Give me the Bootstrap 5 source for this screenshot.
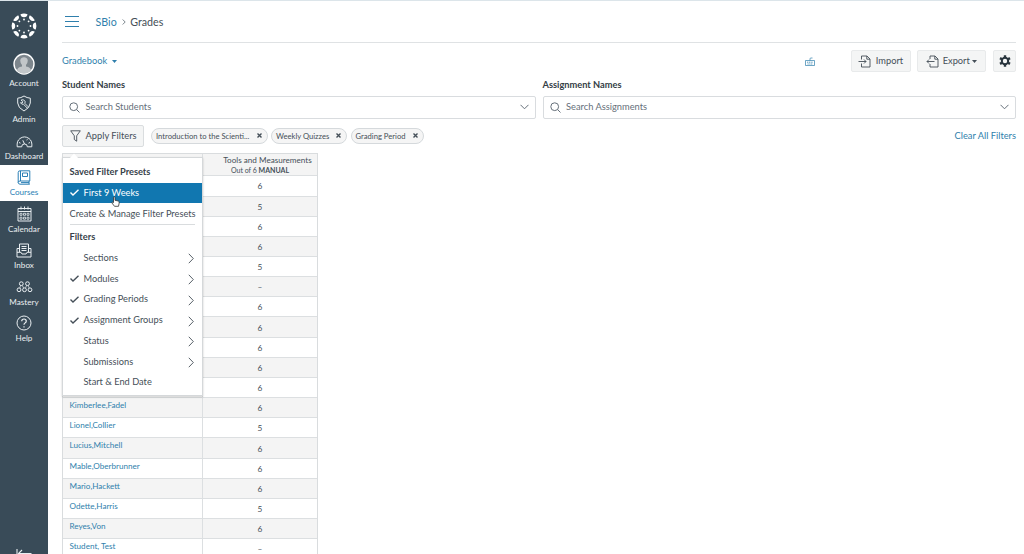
<!DOCTYPE html>
<html lang="en">
<head>
<meta charset="utf-8">
<meta name="viewport" content="width=device-width, initial-scale=1">
<title>Grades</title>
<link href="https://cdn.jsdelivr.net/npm/bootstrap@5.3.0/dist/css/bootstrap.min.css" rel="stylesheet">
<style>
body{font-family:Lato,"Liberation Sans",sans-serif;font-size:9.3px;line-height:12px;color:#454f58;height:554px;overflow:hidden;background:#fff;border-top:1px solid #dce5ea}
svg{display:block;fill:none;stroke:currentColor;stroke-width:1;flex:none}
a{color:#2f7fac;text-decoration:none}
.side{width:48px;height:553px;background:#394b58;color:#e9eef1;font-size:8.15px;line-height:11px;flex:none}
.side a{color:inherit;height:36.5px;padding-bottom:3px}
.side a svg{margin-bottom:2px}
.side a.account{height:41px}
.side a.account svg{margin-bottom:3px}
.side a.current{background:#fff;color:#2b7fb5}
.logo{height:49.5px;padding-top:12px}
.main-area{width:968px;padding-left:14px}
.topbar{height:42px;border-bottom:1px solid #dfe2e4;font-size:10.7px;padding-left:3px}
.tools{height:36px}
.tool{height:22.5px;background:#f4f5f5;border:1px solid #e8eaeb;border-radius:2px;font-size:9.3px}
.lbl{font-weight:700;font-size:9.25px;height:17px;color:#333d45}
.field{height:22.5px;border:1px solid #d9dcdf;border-radius:2px;padding:0 6px;font-size:9.3px;color:#66707a}
.filters{height:34.5px}
.pill{height:16px;border:1px solid #d5d9dc;border-radius:8px;background:#f5f5f5;font-size:7.65px;padding:0 5px 0 4px;margin-right:3.5px}
.gradegrid{width:256px;border:1px solid #d9dcde;border-bottom:0}
.gradegrid .ghead{height:22.4px;background:#f4f4f4;border-bottom:1px solid #dcdfe1}
.grow{height:20.17px;border-bottom:1px solid #dcdfe1}
.grow:nth-child(even){background:#fff}
.grow:nth-child(odd){background:#f4f4f4}
.gname{width:140px;border-right:1px solid #dcdfe1;padding:1px 0 0 6.5px;font-size:8.1px}
.gval{width:114px;font-size:8.3px;padding-top:1px}
.menu{top:3px;left:-1px;width:141px;height:239px;background:#fff;border:1px solid #d5d8da;box-shadow:0 1px 2px #0003;font-size:9.25px}
.menu .tip{top:-5px;left:6px}
.menu .item{height:20.75px;padding:0 6.5px}
.menu .item>svg{margin:2px 1.5px 0 0}
.menu .tick{width:14px}
.menu .on{background:#1177b0;color:#fff}
.menu .hd{font-weight:700;color:#37424a}
</style>
</head>
<body>
<div class="d-flex">
<nav class="side d-flex flex-column">
  <div class="logo d-flex justify-content-center align-items-start">
    <svg width="26" height="26" viewBox="-13 -13 26 26" stroke="none"><g fill="#fff" stroke="none">
      <g id="spoke"><path d="M-3.500-11.800Q0-13 3.500-11.800Q3.200-8.800 0-8.800Q-3.200-8.800-3.500-11.800Z"/><circle cy="-6.500" r=".9"/></g>
      <use href="#spoke" transform="rotate(45)"/><use href="#spoke" transform="rotate(90)"/><use href="#spoke" transform="rotate(135)"/><use href="#spoke" transform="rotate(180)"/><use href="#spoke" transform="rotate(225)"/><use href="#spoke" transform="rotate(270)"/><use href="#spoke" transform="rotate(315)"/></g></svg>
  </div>
  <a href="#" class="account d-flex flex-column align-items-center justify-content-end"><svg width="22" height="22" viewBox="0 0 22 22"><circle cx="11" cy="11" r="10" fill="#7d868d" stroke="#fff" stroke-width="1.4"/><path d="M4 18Q4 14.5 9 13.6V12Q7 10 7.300 7Q8 4.300 11 4.300T14.700 7Q15 10 13 12V13.600Q18 14.500 18 18Q11 23 4 18Z" fill="#c2c6c9" stroke="none"/></svg>Account</a>
  <a href="#" class="d-flex flex-column align-items-center justify-content-end"><svg width="16" height="17" viewBox="0 0 16 17"><path d="M8 1Q11 3 14.300 3.200V8Q14 13 8 16Q2 13 1.700 8V3.200Q5 3 8 1Z"/><path d="M5 5.200Q7 4 8.500 5.500T8.700 8.200L12 11.600L11 12.700L7.500 9.300Q5.500 9.700 4.500 7.700L6.300 8L6.800 6.600Z" stroke-width=".9"/></svg>Admin</a>
  <a href="#" class="d-flex flex-column align-items-center justify-content-end"><svg width="17" height="12" viewBox="0 0 17 12" style="margin-bottom:3px"><path d="M1.200 10.800Q.5 5 4 2.500Q8.500-.7 13 2.500Q16.500 5 15.800 10.800H11.300Q11.500 8 8.500 8T5.700 10.800Z"/><path d="M8.500 8L6.800 4.300M3 6.500l1.500.7M12.500 7.200L14 6.500M10.800 4.300l.5-1"/></svg>Dashboard</a>
  <a href="#" class="current d-flex flex-column align-items-center justify-content-end"><svg width="14" height="15" viewBox="0 0 14 15"><path d="M3 .8H12.800V11H3Q1.200 11 1.200 12.500T3 14.200H12.800M1.200 12.500V2.500Q1.200.8 3 .8M12 11V14M3.500 1V11M5.500 3H10.500V6.500H5.500ZM4 12.600H12"/></svg>Courses</a>
  <a href="#" class="d-flex flex-column align-items-center justify-content-end"><svg width="15" height="16" viewBox="0 0 15 16"><path d="M1 2.500H14V15H1ZM1 5.500H14M4 .5V3.500M7.500.5V3.500M11 .5V3.500"/><path d="M3 7.300h2v2H3zM6.500 7.300h2v2h-2zM10 7.300h2v2h-2zM3 11.200h2v2H3zM6.500 11.200h2v2h-2zM10 11.200h2v2h-2z" stroke-width=".8"/></svg>Calendar</a>
  <a href="#" class="d-flex flex-column align-items-center justify-content-end"><svg width="16" height="15" viewBox="0 0 16 15"><path d="M3.500 9V1H12.500V9M3.500 5.500H1V14H15V5.500H12.500M1 9.300H5L6 11H10L11 9.300H15M5.500 3.500H10.500M5.500 5.500H10.500M5.500 7.500H10.500"/></svg>Inbox</a>
  <a href="#" class="d-flex flex-column align-items-center justify-content-end"><svg width="17" height="12" viewBox="0 0 17 12" style="margin-bottom:4px"><circle cx="5.300" cy="2.700" r="1.900"/><circle cx="11.500" cy="2.700" r="1.900"/><circle cx="3" cy="8.800" r="1.900"/><circle cx="8.500" cy="8.800" r="1.900"/><circle cx="14" cy="8.800" r="1.900"/><path d="M4.600 4.500L3.800 7M6.300 4.500L7.600 7M10.600 4.500L9.500 7M12.200 4.500L13.200 7" stroke-width=".7"/></svg>Mastery</a>
  <a href="#" class="d-flex flex-column align-items-center justify-content-end"><svg width="16" height="16" viewBox="0 0 16 16"><circle cx="8" cy="8" r="7"/><path d="M5.700 6.300Q5.800 4 8 4T10.300 6.100Q10.300 7.300 9 8Q8 8.500 8 9.800M8 11.200V12.500" stroke-width="1.200"/></svg>Help</a>
  <div class="mt-auto d-flex justify-content-center overflow-hidden" style="height:6px"><svg width="16" height="10" viewBox="0 0 16 10"><path d="M1 1V10M2.500 5.500H15.500M6 2L2.500 5.500L6 9" stroke-width="1.100"/></svg></div>
</nav>
<main class="main-area">
  <header class="topbar d-flex align-items-center">
    <svg width="14" height="11" viewBox="0 0 14 11" style="color:#2f7fac"><path d="M0 .500H14M0 5.500H14M0 10.500H14"/></svg>
    <a href="#" style="margin-left:16.500px">SBio</a>
    <svg width="4" height="6" viewBox="0 0 4 6" style="color:#7b858d;margin:1px 4.500px 0 5px"><path d="M.7.5L3.200 3L.7 5.500"/></svg>
    <span>Grades</span>
  </header>
  <div class="tools d-flex align-items-center">
    <a href="#" class="d-flex align-items-center me-auto">Gradebook <svg width="5" height="3" viewBox="0 0 5 3" style="margin-left:5px"><path fill="currentColor" stroke="none" d="M0 0H5L2.500 3Z"/></svg></a>
    <svg width="10" height="9" viewBox="0 0 10 9" style="color:#2f7fac;margin-right:36px"><path d="M.5 3.500H9.500V8.500H.5ZM5 3.500V1.800Q5 1 6 1H7.500" stroke-width=".7"/><path d="M2 5.200H8M2.500 7H7.500" stroke-width=".8" stroke-dasharray="1.200 .6"/></svg>
    <div class="tool d-flex align-items-center justify-content-center" style="width:59.500px;margin-right:6.500px;gap:4.500px"><svg width="13" height="13" viewBox="0 0 13 13"><path d="M3.500 4.500V1H9L12 4V12H3.500V8.500M8.800 1V4.200H12M.5 6.500H8M6 4.500L8 6.500L6 8.500" stroke-width=".9"/></svg>Import</div>
    <div class="tool d-flex align-items-center justify-content-center gap-1" style="width:68.500px;margin-right:7.500px"><svg width="13" height="13" viewBox="0 0 13 13"><path d="M4 4V1H9L12 4V12H4V9M8.800 1V4.200H12M1 6.500H8.500M3 4.500L1 6.500L3 8.500" stroke-width=".9"/></svg>Export<svg width="5" height="3" viewBox="0 0 5 3" style="margin-left:-2px"><path fill="currentColor" stroke="none" d="M0 0H5L2.500 3Z"/></svg></div>
    <div class="tool d-flex align-items-center justify-content-center" style="width:23px"><svg width="12" height="12" viewBox="-6 -6 12 12" style="color:#28343d"><circle r="3.200" stroke-width="2"/><path d="M0-5.700V-3.500M0 5.700V3.500M-5-2.900L-3-1.700M5 2.900L3 1.700M-5 2.900L-3 1.700M5-2.900L3-1.700" stroke-width="2.400"/></svg></div>
  </div>
  <div class="d-flex" style="gap:7px">
    <div class="w-50"><div class="lbl">Student Names</div>
      <div class="field d-flex align-items-center"><svg width="11" height="11" viewBox="0 0 11 11"><circle cx="4.700" cy="4.700" r="3.900"/><path d="M7.500 7.500L10.500 10.500"/></svg><span class="me-auto" style="margin-left:5.500px">Search Students</span><svg width="9" height="6" viewBox="0 0 9 6"><path d="M.5.8L4.500 4.800L8.500.8"/></svg></div></div>
    <div class="w-50"><div class="lbl">Assignment Names</div>
      <div class="field d-flex align-items-center"><svg width="11" height="11" viewBox="0 0 11 11"><circle cx="4.700" cy="4.700" r="3.900"/><path d="M7.500 7.500L10.500 10.500"/></svg><span class="me-auto" style="margin-left:5.500px">Search Assignments</span><svg width="9" height="6" viewBox="0 0 9 6"><path d="M.5.8L4.500 4.800L8.500.8"/></svg></div></div>
  </div>
  <div class="filters d-flex align-items-center">
    <div class="tool d-flex align-items-center" style="width:82px;padding-left:7px;margin-right:7px;border-color:#dadddf"><svg width="11" height="12" viewBox="0 0 11 12"><path d="M.7.800H10.300L6.700 5.800V11.200L4.300 9.500V5.800Z" stroke-width=".9"/></svg><span style="margin-left:4.500px">Apply Filters</span></div>
    <div class="pill d-flex align-items-center justify-content-between" style="width:116.500px">Introduction to the Scienti...<svg width="5" height="5" viewBox="0 0 5 5"><path d="M.5.500l4 4M4.500.500l-4 4" stroke-width="1.400"/></svg></div>
    <div class="pill d-flex align-items-center justify-content-between" style="width:76px">Weekly Quizzes<svg width="5" height="5" viewBox="0 0 5 5"><path d="M.5.500l4 4M4.500.500l-4 4" stroke-width="1.400"/></svg></div>
    <div class="pill d-flex align-items-center justify-content-between" style="width:73.500px">Grading Period<svg width="5" height="5" viewBox="0 0 5 5"><path d="M.5.500l4 4M4.500.500l-4 4" stroke-width="1.400"/></svg></div>
    <a href="#" class="ms-auto">Clear All Filters</a>
  </div>
  <section class="gradegrid position-relative">
    <div class="ghead d-flex"><div class="gname"></div><div class="text-center text-nowrap" style="width:114px;font-size:8.150px;line-height:10px;padding-top:1px"><div style="margin-left:15px">Tools and Measurements</div><div style="font-size:7px">Out of 6 <b>MANUAL</b></div></div></div>
    <div class="grow d-flex"><div class="gname"></div><div class="gval text-center align-self-center">6</div></div>
    <div class="grow d-flex"><div class="gname"></div><div class="gval text-center align-self-center">5</div></div>
    <div class="grow d-flex"><div class="gname"></div><div class="gval text-center align-self-center">6</div></div>
    <div class="grow d-flex"><div class="gname"></div><div class="gval text-center align-self-center">6</div></div>
    <div class="grow d-flex"><div class="gname"></div><div class="gval text-center align-self-center">5</div></div>
    <div class="grow d-flex"><div class="gname"></div><div class="gval text-center align-self-center">–</div></div>
    <div class="grow d-flex"><div class="gname"></div><div class="gval text-center align-self-center">6</div></div>
    <div class="grow d-flex"><div class="gname"></div><div class="gval text-center align-self-center">6</div></div>
    <div class="grow d-flex"><div class="gname"></div><div class="gval text-center align-self-center">6</div></div>
    <div class="grow d-flex"><div class="gname"></div><div class="gval text-center align-self-center">6</div></div>
    <div class="grow d-flex"><div class="gname"></div><div class="gval text-center align-self-center">6</div></div>
    <div class="grow d-flex"><a href="#" class="gname">Kimberlee,Fadel</a><div class="gval text-center align-self-center">6</div></div>
    <div class="grow d-flex"><a href="#" class="gname">Lionel,Collier</a><div class="gval text-center align-self-center">5</div></div>
    <div class="grow d-flex"><a href="#" class="gname">Lucius,Mitchell</a><div class="gval text-center align-self-center">6</div></div>
    <div class="grow d-flex"><a href="#" class="gname">Mable,Oberbrunner</a><div class="gval text-center align-self-center">6</div></div>
    <div class="grow d-flex"><a href="#" class="gname">Mario,Hackett</a><div class="gval text-center align-self-center">6</div></div>
    <div class="grow d-flex"><a href="#" class="gname">Odette,Harris</a><div class="gval text-center align-self-center">5</div></div>
    <div class="grow d-flex"><a href="#" class="gname">Reyes,Von</a><div class="gval text-center align-self-center">6</div></div>
    <div class="grow d-flex"><a href="#" class="gname">Student, Test</a><div class="gval text-center align-self-center">–</div></div>
    <div class="menu position-absolute">
      <svg class="tip position-absolute" width="10" height="6" viewBox="0 0 10 6"><path d="M0 6L5 .500L10 6Z" fill="#fff" stroke="none"/></svg>
      <div class="item hd d-flex align-items-center" style="height:24.500px;padding-top:3px">Saved Filter Presets</div>
      <div class="item on d-flex align-items-center"><span class="tick"><svg width="9" height="7" viewBox="0 0 9 7"><path d="M.5 3.500L3 6L8.500.800" stroke-width="1.400"/></svg></span>First 9 Weeks</div>
      <div class="item d-flex align-items-center text-nowrap">Create &amp; Manage Filter Presets</div>
      <div style="border-top:1px solid #d9dcde;margin:0 7px"></div>
      <div class="item hd d-flex align-items-center" style="height:22.500px;padding-top:1px">Filters</div>
      <div class="item d-flex align-items-center"><span class="tick"></span><span class="me-auto">Sections</span><svg width="6" height="11" viewBox="0 0 6 11"><path d="M.8.800L5.300 5.500L.8 10.200" stroke-width=".9"/></svg></div>
      <div class="item d-flex align-items-center"><span class="tick"><svg width="9" height="7" viewBox="0 0 9 7"><path d="M.5 3.500L3 6L8.500.800" stroke-width="1.400"/></svg></span><span class="me-auto">Modules</span><svg width="6" height="11" viewBox="0 0 6 11"><path d="M.8.800L5.300 5.500L.8 10.200" stroke-width=".9"/></svg></div>
      <div class="item d-flex align-items-center"><span class="tick"><svg width="9" height="7" viewBox="0 0 9 7"><path d="M.5 3.500L3 6L8.500.800" stroke-width="1.400"/></svg></span><span class="me-auto">Grading Periods</span><svg width="6" height="11" viewBox="0 0 6 11"><path d="M.8.800L5.300 5.500L.8 10.200" stroke-width=".9"/></svg></div>
      <div class="item d-flex align-items-center"><span class="tick"><svg width="9" height="7" viewBox="0 0 9 7"><path d="M.5 3.500L3 6L8.500.800" stroke-width="1.400"/></svg></span><span class="me-auto">Assignment Groups</span><svg width="6" height="11" viewBox="0 0 6 11"><path d="M.8.800L5.300 5.500L.8 10.200" stroke-width=".9"/></svg></div>
      <div class="item d-flex align-items-center"><span class="tick"></span><span class="me-auto">Status</span><svg width="6" height="11" viewBox="0 0 6 11"><path d="M.8.800L5.300 5.500L.8 10.200" stroke-width=".9"/></svg></div>
      <div class="item d-flex align-items-center"><span class="tick"></span><span class="me-auto">Submissions</span><svg width="6" height="11" viewBox="0 0 6 11"><path d="M.8.800L5.300 5.500L.8 10.200" stroke-width=".9"/></svg></div>
      <div class="item d-flex align-items-center"><span class="tick"></span>Start &amp; End Date</div>
      <svg class="position-absolute" style="left:48px;top:38px" width="9" height="11" viewBox="0 0 9 11"><path d="M2.500 6V1.200Q3.200.3 4 1.200V4.300L7.300 5Q8.400 5.400 8.200 7L7.500 10.300H3.500L.8 6.800Q1 5.600 2.500 6.600Z" fill="#fff" stroke="#333" stroke-width=".8"/></svg>
    </div>
  </section>
</main>
</div>
<script src="https://cdn.jsdelivr.net/npm/bootstrap@5.3.0/dist/js/bootstrap.bundle.min.js"></script>
</body>
</html>
